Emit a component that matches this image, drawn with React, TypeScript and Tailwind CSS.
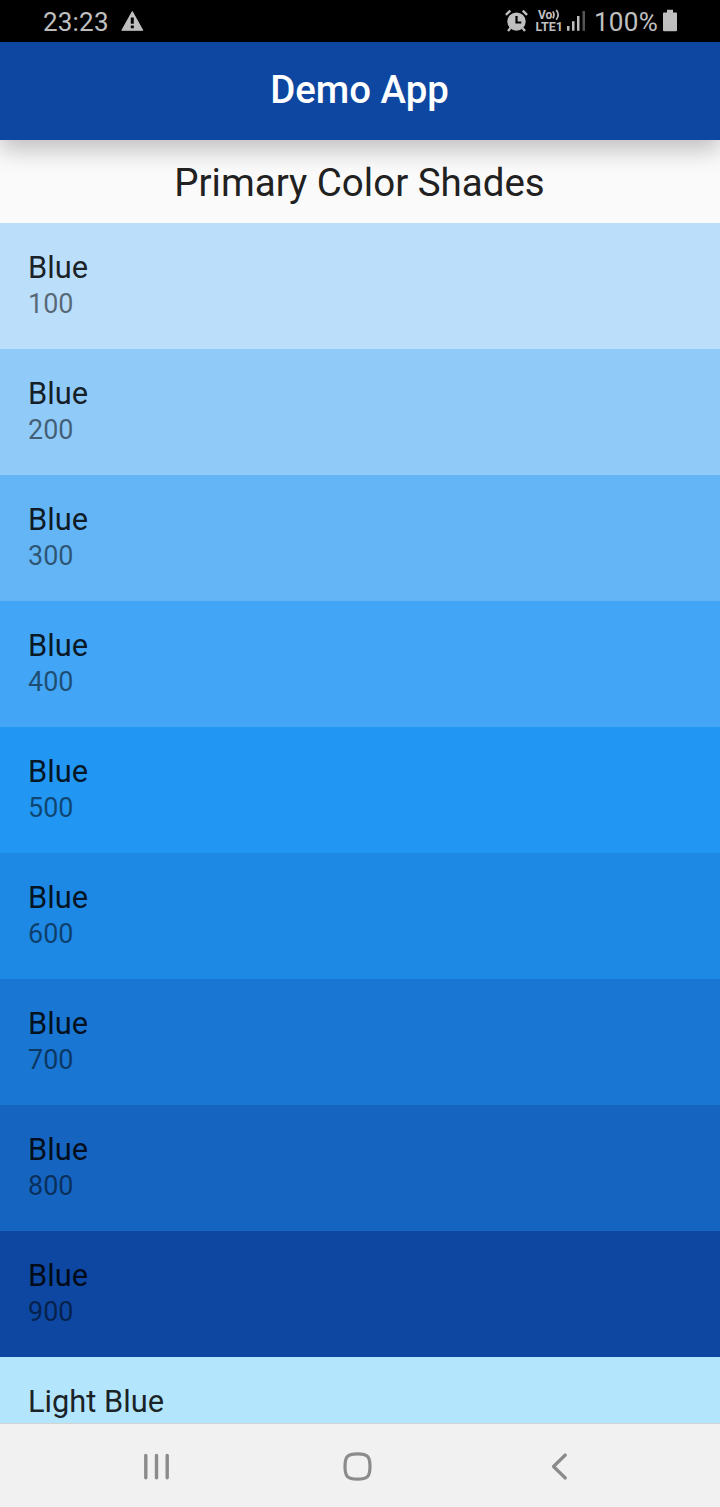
type Swatch = { name: string; shade?: string; bg: string };

const swatches: Swatch[] = [
  { name: 'Blue', shade: '100', bg: 'bg-[#bbdefb]' },
  { name: 'Blue', shade: '200', bg: 'bg-[#90caf9]' },
  { name: 'Blue', shade: '300', bg: 'bg-[#64b5f6]' },
  { name: 'Blue', shade: '400', bg: 'bg-[#42a5f5]' },
  { name: 'Blue', shade: '500', bg: 'bg-[#2196f3]' },
  { name: 'Blue', shade: '600', bg: 'bg-[#1e88e5]' },
  { name: 'Blue', shade: '700', bg: 'bg-[#1976d2]' },
  { name: 'Blue', shade: '800', bg: 'bg-[#1565c0]' },
  { name: 'Blue', shade: '900', bg: 'bg-[#0d47a1]' },
  { name: 'Light Blue', bg: 'bg-[#b3e5fc]' },
];

function WarningIcon() {
  return (
    <svg className="ml-[11px] h-[22px] w-6 shrink-0" viewBox="0 0 24 22">
      <path d="M12.3 1.5L22.8 20.3H1.8Z" fill="#c0c0c0" stroke="#c0c0c0" strokeWidth="1" strokeLinejoin="round" />
      <path d="M10.8 7.5h3v6.3h-3zM10.8 15.4h3v2.8h-3z" fill="#000" />
    </svg>
  );
}

function AlarmIcon() {
  return (
    <svg className="h-6 w-6 shrink-0" viewBox="0 0 24 24">
      <circle cx="12.5" cy="12.6" r="9.2" fill="#c0c0c0" />
      <path d="M1.9 5.800L6.300 1.700M23.100 5.800L18.700 1.700M6.500 19L4 22M18.500 19l2.500 3" stroke="#c0c0c0" strokeWidth="2.4" fill="none" />
      <path d="M12.500 7v6.500h4.800" stroke="#000" strokeWidth="2.2" fill="none" />
    </svg>
  );
}

function VoLte() {
  return (
    <div className="ml-[7px] flex w-7 shrink-0 flex-col text-[12.5px] leading-[12px] font-bold text-[#c0c0c0]">
      <span className="flex items-center pl-[3px] text-[12px]">
        Vo
        <svg className="h-3 w-2 shrink-0" viewBox="0 0 8 12">
          <path d="M.8 2.600q2.400 3.200 0 6.600M4.200 1q4 4.800 0 9.800" fill="none" stroke="#c0c0c0" strokeWidth="1.7" />
        </svg>
      </span>
      <span className="pl-[0.5px] tracking-[0.1px] whitespace-nowrap">LTE1</span>
    </div>
  );
}

function SignalIcon() {
  return (
    <svg className="ml-[3px] h-6 w-5 shrink-0" viewBox="0 0 20 24">
      <path d="M1 17h2.5v4.8H1zM6 12.3h2.5v9.5H6zM11 7h2.5v14.8H11z" fill="#c0c0c0" />
      <path d="M16.5 2H19v19.8h-2.500z" fill="#555" />
    </svg>
  );
}

function StatusBar() {
  return (
    <div className="flex h-[42px] shrink-0 items-center bg-black pr-[42px] pl-[43px] text-[#c0c0c0]">
      <span className="pt-[2px] text-[26px] leading-[30px] tracking-[0.2px]">23:23</span>
      <WarningIcon />
      <div className="ml-auto flex items-center">
        <AlarmIcon />
        <VoLte />
        <SignalIcon />
        <span className="ml-2 pt-[2px] text-[26px] leading-[30px] tracking-[0.3px]">100%</span>
        <svg className="ml-1 h-6 w-4 shrink-0" viewBox="0 0 16 24">
          <path d="M5 .8h6v2.7h3q1 0 1 1v16.7q0 1-1 1H2q-1 0-1-1V4.500q0-1 1-1h3z" fill="#c0c0c0" />
        </svg>
      </div>
    </div>
  );
}

function NavigationBar() {
  return (
    <div className="flex h-[84px] shrink-0 items-center justify-between border-t border-[#d3d3d3] bg-[#f1f1f1] pr-[144px] pl-[140px]">
      <svg className="h-8 w-8" viewBox="0 0 32 32" fill="none" stroke="#8b8b8b" strokeWidth="3.4" strokeLinecap="round">
        <path d="M5.800 5.500v22.2M16.5 5.500v22.2M27.2 5.500v22.2" />
      </svg>
      <svg className="h-8 w-8" viewBox="0 0 32 32" fill="none" stroke="#8b8b8b" strokeWidth="3.2">
        <path d="M15.500 3.9C25.500 3.9 28 6.300 28 16.500S25.500 29.100 15.500 29.100S3 26.700 3 16.500S5.500 3.900 15.500 3.900Z" />
      </svg>
      <svg className="h-8 w-8" viewBox="0 0 32 32" fill="none" stroke="#8b8b8b" strokeWidth="3.2" strokeLinecap="round" strokeLinejoin="round">
        <path d="M21.300 5L9.500 16.500L21.300 28" />
      </svg>
    </div>
  );
}

export default function App() {
  return (
    <div className="flex h-[1507px] w-[720px] flex-col overflow-hidden bg-[#fafafa] font-[Roboto,sans-serif]">
      <StatusBar />
      <header className="relative z-10 flex h-[98px] shrink-0 items-center justify-center bg-[#0d47a1] pr-[1px] pb-[2px] shadow-[0_9px_24px_0_rgba(0,0,0,0.2),0_4px_24px_2px_rgba(0,0,0,0.07)]">
        <h1 className="text-[38.4px] leading-[46px] font-medium text-white">Demo App</h1>
      </header>
      <main className="min-h-0 flex-1 overflow-hidden">
        <h2 className="flex h-[83px] items-center justify-center pt-[2px] pr-[1px] text-[38.5px] leading-[46px] text-[#212121]">
          Primary Color Shades
        </h2>
        <ul>
          {swatches.map(({ name, shade, bg }) => (
            <li key={bg} className={`flex h-[126px] flex-col px-7 pt-[27px] ${bg}`}>
              <span className="text-[30.8px] leading-9 text-black/87">{name}</span>
              {shade && <span className="text-[26.95px] leading-9 text-black/54">{shade}</span>}
            </li>
          ))}
        </ul>
      </main>
      <NavigationBar />
    </div>
  );
}
